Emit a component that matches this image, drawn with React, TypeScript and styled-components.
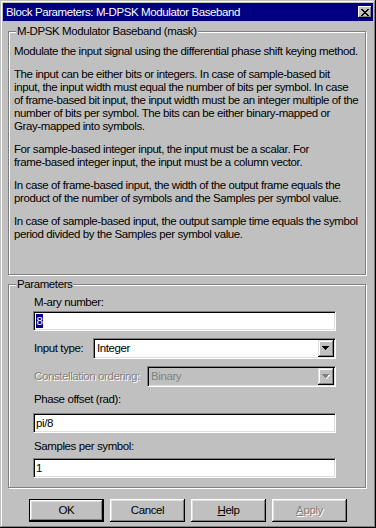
import styled, { createGlobalStyle } from "styled-components"

const GlobalStyle = createGlobalStyle`
    html, body {
        margin: 0;
        padding: 0;
        background: #c0c0c0;
    }
    body {
        font-family: "Liberation Sans", Arial, sans-serif;
        font-size: 11.5px;
        letter-spacing: -0.4px;
        color: #000;
    }
`

const Window = styled.div`
    box-sizing: border-box;
    width: 376px;
    height: 528px;
    padding: 3px;
    background: #c0c0c0;
    box-shadow: inset -1px -1px #000, inset 1px 1px #c0c0c0, inset -2px -2px #808080, inset 2px 2px #fff;
    display: flex;
    flex-direction: column;
`

const TitleBar = styled.div`
    height: 18px;
    flex: none;
    background: #000080;
    color: #fff;
    display: flex;
    align-items: center;
    justify-content: space-between;
    padding-left: 3px;
    line-height: 13px;
`

const CloseButton = styled.div`
    width: 14px;
    height: 12px;
    margin-right: 1px;
    background: #c0c0c0;
    box-shadow: inset -1px -1px #000, inset 1px 1px #fff, inset -2px -2px #808080;
    display: flex;
    align-items: center;
    justify-content: center;
`

const Body = styled.div`
    flex: 1;
    display: flex;
    flex-direction: column;
    padding: 0 7px 3px 5px;
`

const GroupBox = styled.fieldset<{ $grow?: boolean; $gap: number }>`
    margin: ${p => p.$gap}px 0 0 0;
    padding: 0;
    min-width: 0;
    min-height: 0;
    border: 1px solid #808080;
    box-shadow: inset 1px 1px #fff, 1px 1px #fff;
    flex: ${p => (p.$grow ? "1" : "none")};
`

const Legend = styled.legend`
    margin-left: 7px;
    padding: 0 1px;
    line-height: 13px;
    background: #c0c0c0;
`

const Description = styled.div`
    padding: 7px 6px 0 5px;
`

const Paragraph = styled.p`
    margin: 0;
    line-height: 13px;
    white-space: nowrap;
    & + & {
        margin-top: 10px;
    }
`

const ParamList = styled.div`
    display: flex;
    flex-direction: column;
    padding: 5px 29px 9px 24px;
`

const Label = styled.div<{ $gap: number; $disabled?: boolean }>`
    margin-top: ${p => p.$gap}px;
    padding-left: 1px;
    line-height: 13px;
    color: ${p => (p.$disabled ? "#808080" : "#000")};
    text-shadow: ${p => (p.$disabled ? "1px 1px #fff" : "none")};
`

const Edit = styled.div<{ $gap: number }>`
    box-sizing: border-box;
    height: 20px;
    margin-top: ${p => p.$gap}px;
    background: #fff;
    border: 1px solid;
    border-color: #808080 #fff #fff #808080;
    box-shadow: inset 1px 1px #000, inset -1px -1px #dfdfdf;
    padding: 0 2px;
    display: flex;
    align-items: center;
    line-height: 13px;
`

const Selected = styled.span`
    display: inline-block;
    width: 7px;
    height: 14px;
    line-height: 14px;
    text-align: center;
    background: #000080;
    color: #fff;
`

const ComboRow = styled.div<{ $gap: number }>`
    display: flex;
    align-items: center;
    height: 21px;
    margin-top: ${p => p.$gap}px;
`

const ComboLabel = styled(Label)<{ $width: number }>`
    width: ${p => p.$width}px;
    flex: none;
    box-sizing: border-box;
    white-space: nowrap;
`

const Combo = styled.div<{ $disabled?: boolean }>`
    flex: 1;
    box-sizing: border-box;
    height: 21px;
    display: flex;
    align-items: stretch;
    background: ${p => (p.$disabled ? "#c0c0c0" : "#fff")};
    color: ${p => (p.$disabled ? "#808080" : "#000")};
    border: 1px solid;
    border-color: #808080 #fff #fff #808080;
    box-shadow: inset 1px 1px #000, inset -1px -1px #dfdfdf;
    padding: 1px 1px 1px 3px;
`

const ComboText = styled.div`
    flex: 1;
    display: flex;
    align-items: center;
    line-height: 13px;
`

const DropButton = styled.div`
    width: 16px;
    flex: none;
    background: #c0c0c0;
    box-shadow: inset -1px -1px #000, inset 1px 1px #dfdfdf, inset -2px -2px #808080, inset 2px 2px #fff;
    display: flex;
    align-items: center;
    justify-content: center;
`

const ButtonRow = styled.div`
    display: flex;
    gap: 6px;
    margin-top: 11px;
    padding-left: 21px;
`

const PushButton = styled.button<{ $default?: boolean; $disabled?: boolean }>`
    box-sizing: border-box;
    width: 75px;
    height: 23px;
    margin: 0;
    padding: 0;
    font: inherit;
    letter-spacing: inherit;
    background: #c0c0c0;
    border: ${p => (p.$default ? "1px solid #000" : "none")};
    box-shadow: inset -1px -1px #000, inset 1px 1px #fff, inset -2px -2px #808080, inset 2px 2px #dfdfdf;
    color: ${p => (p.$disabled ? "#808080" : "#000")};
    text-shadow: ${p => (p.$disabled ? "1px 1px #fff" : "none")};
    line-height: 13px;
`

const closeRows: [number, number][][] = [
    [[0, 2], [6, 2]],
    [[1, 2], [5, 2]],
    [[2, 4]],
    [[3, 2]],
    [[2, 4]],
    [[1, 2], [5, 2]],
    [[0, 2], [6, 2]],
]

const CloseGlyph = () => (
    <svg width="8" height="7" viewBox="0 0 8 7" shapeRendering="crispEdges">
        {closeRows.map((row, y) =>
            row.map(([x, w]) => <rect key={`${y}-${x}`} x={x} y={y} width={w} height={1} fill="#000" />)
        )}
    </svg>
)

const Arrow = ({ disabled }: { disabled?: boolean }) => (
    <svg width="8" height="5" viewBox="0 0 8 5" shapeRendering="crispEdges">
        {disabled && <path d="M1 1h7v1h-1v1h-1v1h-1v1h-1v-1h1v-1h1v-1h1z" fill="#fff" />}
        <path d="M0 0h7v1h-1v1h-1v1h-1v1h-1v-1h-1v-1h-1v-1h-1z" fill={disabled ? "#808080" : "#000"} />
    </svg>
)

const paragraphs: string[][] = [
    ["Modulate the input signal using the differential phase shift keying method."],
    [
        "The input can be either bits or integers. In case of sample-based bit",
        "input, the input width must equal the number of bits per symbol. In case",
        "of frame-based bit input, the input width must be an integer multiple of the",
        "number of bits per symbol. The bits can be either binary-mapped or",
        "Gray-mapped into symbols.",
    ],
    [
        "For sample-based integer input, the input must be a scalar. For",
        "frame-based integer input, the input must be a column vector.",
    ],
    [
        "In case of frame-based input, the width of the output frame equals the",
        "product of the number of symbols and the Samples per symbol value.",
    ],
    [
        "In case of sample-based input, the output sample time equals the symbol",
        "period divided by the Samples per symbol value.",
    ],
]

export default function App() {
    return (
        <>
            <GlobalStyle />
            <Window>
                <TitleBar>
                    <span>Block Parameters: M-DPSK Modulator Baseband</span>
                    <CloseButton><CloseGlyph /></CloseButton>
                </TitleBar>
                <Body>
                    <GroupBox $grow $gap={4}>
                        <Legend>M-DPSK Modulator Baseband (mask)</Legend>
                        <Description>
                            {paragraphs.map((lines, i) => (
                                <Paragraph key={i}>
                                    {lines.map((l, j) => (
                                        <span key={j}>{l}{j < lines.length - 1 && <br />}</span>
                                    ))}
                                </Paragraph>
                            ))}
                        </Description>
                    </GroupBox>
                    <GroupBox $gap={3}>
                        <Legend>Parameters</Legend>
                        <ParamList>
                            <Label $gap={0}>M-ary number:</Label>
                            <Edit $gap={2}><Selected>8</Selected></Edit>
                            <ComboRow $gap={7}>
                                <ComboLabel $gap={0} $width={60}>Input type:</ComboLabel>
                                <Combo>
                                    <ComboText>Integer</ComboText>
                                    <DropButton><Arrow /></DropButton>
                                </Combo>
                            </ComboRow>
                            <ComboRow $gap={7}>
                                <ComboLabel $gap={0} $width={114} $disabled>Constellation ordering:</ComboLabel>
                                <Combo $disabled>
                                    <ComboText>Binary</ComboText>
                                    <DropButton><Arrow disabled /></DropButton>
                                </Combo>
                            </ComboRow>
                            <Label $gap={6}>Phase offset (rad):</Label>
                            <Edit $gap={7}>pi/8</Edit>
                            <Label $gap={7}>Samples per symbol:</Label>
                            <Edit $gap={5}>1</Edit>
                        </ParamList>
                    </GroupBox>
                    <ButtonRow>
                        <PushButton $default>OK</PushButton>
                        <PushButton>Cancel</PushButton>
                        <PushButton><u>H</u>elp</PushButton>
                        <PushButton $disabled><u>A</u>pply</PushButton>
                    </ButtonRow>
                </Body>
            </Window>
        </>
    )
}
